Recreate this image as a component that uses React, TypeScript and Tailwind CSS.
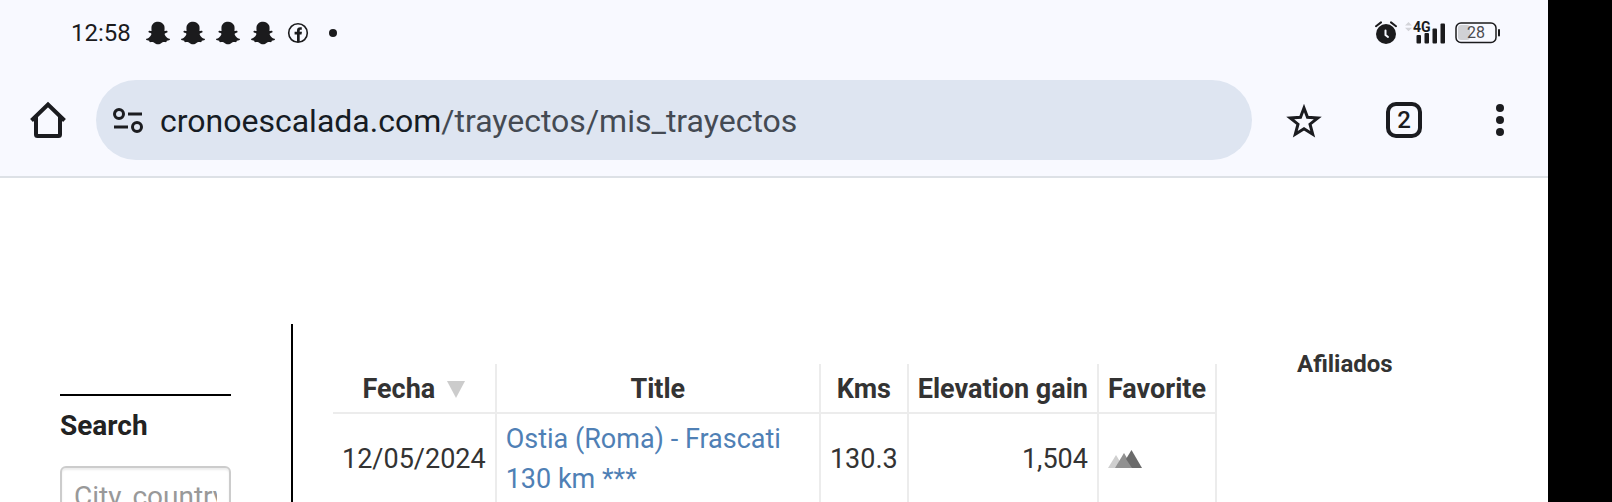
import { FaSnapchatGhost } from "react-icons/fa";

const rides = [
  {
    date: "12/05/2024",
    title: "Ostia (Roma) - Frascati 130 km ***",
    kms: "130.3",
    gain: "1,504",
  },
];

function StatusBar() {
  return (
    <div className="flex h-16 items-center justify-between pl-[71px] pr-[47px] pt-px text-[#1b1b1d]">
      <div className="flex items-center">
        <span className="text-2xl">12:58</span>
        <div className="ml-[15px] flex items-center gap-[11px]">
          <SnapIcon />
          <SnapIcon />
          <SnapIcon />
          <SnapIcon />
          {/* Facebook */}
          <svg width="24" height="24" viewBox="0 0 24 24">
            <circle cx="12" cy="12" r="9.3" fill="none" stroke="currentColor" strokeWidth="1.6" />
            <path d="M11 21v-7.500H8.600v-2.700H11V9.500C11 7.300 12.200 6.300 14.200 6.300h1.600v2.500h-1c-.8 0-1.100.4-1.100 1.100v.9h2.300l-.5 2.700h-1.800V21z" fill="currentColor" />
          </svg>
        </div>
        <span className="ml-[19px] size-2 rounded-full bg-current" />
      </div>

      <div className="flex items-center">
        {/* Alarm */}
        <svg width="22" height="24" viewBox="0 0 22 24">
          <circle cx="11" cy="13" r="10" fill="currentColor" />
          <path d="M1 5.200L6 1.400M21 5.200L16 1.400" stroke="currentColor" strokeWidth="2" strokeLinecap="round" />
          <path d="M10.500 9.500v4.500l2.500 2" fill="none" stroke="#f8f9ff" strokeWidth="2" strokeLinecap="round" />
        </svg>
        {/* Mobile signal */}
        <svg width="42" height="32" viewBox="0 -4 42 32" className="ml-2">
          <path d="M0 4.500L3.500 1 7 4.500zM0 6.800h7L3.500 10.300z" fill="#d3d4d9" />
          <rect x="11.500" y="14" width="4.500" height="8.500" rx="1" fill="currentColor" />
          <rect x="19.500" y="12" width="4.500" height="10.500" rx="1" fill="currentColor" />
          <rect x="27.500" y="7.500" width="4.500" height="15" rx="1" fill="currentColor" />
          <rect x="35.500" y="2.500" width="4.500" height="20" rx="1" fill="currentColor" />
          <text x="8" y="11" fontSize="14" fontWeight="700" fill="currentColor">4G</text>
        </svg>
        {/* Battery */}
        <svg width="46" height="24" viewBox="0 0 46 24" className="ml-2">
          <rect x="3" y="4" width="12" height="15" rx="3" fill="#d0d1d5" />
          <rect x="1" y="2" width="40" height="19.500" rx="5" fill="none" stroke="currentColor" strokeWidth="1.500" />
          <rect x="43" y="8" width="2" height="7.500" rx="1" fill="currentColor" />
          <text x="21" y="17" fontSize="16" fill="#4b4c50" textAnchor="middle">28</text>
        </svg>
      </div>
    </div>
  );
}

function SnapIcon() {
  return <FaSnapchatGhost className="size-6" />;
}

function Toolbar() {
  return (
    <div className="flex items-start border-b-2 border-[#dde1e6] px-6 py-4 text-[#1b1c20]">
      <button type="button" aria-label="Home" className="flex h-20 w-12 items-center justify-center">
        <svg width="36" height="38" viewBox="0 0 36 38" fill="none" stroke="currentColor" strokeWidth="4">
          <path d="M6 15.500V33.500a1.500 1.500 0 0 0 1.500 1.500h21a1.500 1.500 0 0 0 1.500-1.500V15.500" />
          <path d="M1.500 19.500L18 3.500l16.500 16" />
        </svg>
      </button>

      <button type="button" className="ml-6 flex h-20 flex-1 items-center rounded-full bg-[#dee5f1] pl-4 text-left text-[32px]">
        {/* Site settings */}
        <svg width="32" height="28" viewBox="0 0 32 28" fill="none" stroke="currentColor" strokeWidth="3">
          <circle cx="7" cy="8" r="4.500" />
          <path d="M16 8h14M2 21h14" />
          <circle cx="25" cy="21" r="4.500" />
        </svg>
        <span className="ml-4 pt-0.5 text-[#161c24]">
          cronoescalada.com<span className="text-[#444a53]">/trayectos/mis_trayectos</span>
        </span>
      </button>

      <button type="button" aria-label="Bookmark" className="ml-7 flex h-20 w-12 items-center justify-center">
        <svg width="36" height="36" viewBox="0 0 36 36" fill="none" stroke="currentColor" strokeWidth="3">
          <path d="M18 6L21.500 15.300 31.800 15.900 24 22.200 26.700 32.200 18 26.700 9.300 32.200 12 22.200 4.200 15.900 14.500 15.300z" />
        </svg>
      </button>
      <button type="button" aria-label="Tabs" className="ml-[52px] flex h-20 w-12 items-center justify-center">
        <span className="flex size-9 items-center justify-center rounded-[10px] border-4 border-current text-2xl font-medium">2</span>
      </button>
      <button type="button" aria-label="More" className="ml-12 flex h-20 w-12 flex-col items-center justify-center gap-1">
        <span className="size-2 rounded-full bg-current" />
        <span className="size-2 rounded-full bg-current" />
        <span className="size-2 rounded-full bg-current" />
      </button>
    </div>
  );
}

function Mountains() {
  return (
    <svg width="34" height="20" viewBox="0 0 34 20">
      <path d="M0 19L8 6l8 13z" fill="#cfcfcf" />
      <path d="M7 19l9-15 9 15z" fill="#919191" />
      <path d="M18 10L23.500 1 34 19H24z" fill="#6b6b6b" />
    </svg>
  );
}

export default function App() {
  return (
    <div className="flex h-screen overflow-hidden bg-black font-[Roboto,sans-serif]">
      <div className="flex min-w-0 flex-1 flex-col bg-white">
        <header className="shrink-0 bg-[#f8f9ff]">
          <StatusBar />
          <Toolbar />
        </header>

        <div className="flex min-h-0 flex-1 pt-[146px] text-[27px] leading-10 text-[#333]">
          {/* Search */}
          <aside className="w-[291px] shrink-0 px-[60px] pt-[70px] text-[28px]">
            <div className="border-t-2 border-black pt-[10px]">
              <label htmlFor="place" className="block font-bold text-[#222]">Search</label>
              <input
                id="place"
                type="text"
                placeholder="City, country"
                className="mt-5 block h-15 w-full rounded-md border-2 border-[#ccc] px-3 shadow-[inset_0_2px_2px_rgba(0,0,0,0.075)] placeholder:text-[#999]"
              />
            </div>
          </aside>

          {/* Rides */}
          <main className="min-w-0 flex-1 border-l-2 border-black pl-10 pt-10">
            <table className="w-full border-separate border-spacing-0">
              <thead>
                <tr className="whitespace-nowrap *:border-b-2 *:border-r-2 *:border-[#ececec] *:px-[9px] *:pb-[3px] *:pt-[5px]">
                  <th>
                    <button type="button" className="inline-flex items-center gap-3 font-bold">
                      Fecha
                      <svg width="18" height="18" viewBox="0 0 18 18">
                        <path d="M0 1h18L9 18z" fill="#ccc" />
                      </svg>
                    </button>
                  </th>
                  <th className="w-full">Title</th>
                  <th>Kms</th>
                  <th>Elevation gain</th>
                  <th>Favorite</th>
                </tr>
              </thead>
              <tbody>
                {rides.map((ride) => (
                  <tr key={ride.date} className="*:border-r-2 *:border-[#ececec] *:px-[9px] *:pb-[3px] *:pt-[5px]">
                    <td>{ride.date}</td>
                    <td>
                      <a href="#" className="text-[#4f80b5]">{ride.title}</a>
                    </td>
                    <td className="text-right">{ride.kms}</td>
                    <td className="text-right">{ride.gain}</td>
                    <td>
                      <Mountains />
                    </td>
                  </tr>
                ))}
              </tbody>
            </table>
          </main>

          <aside className="w-[331px] shrink-0 pl-20 pt-5">
            <h2 className="text-2xl/10 font-bold">Afiliados</h2>
          </aside>
        </div>
      </div>
      <div className="w-16 shrink-0 bg-black" />
    </div>
  );
}
